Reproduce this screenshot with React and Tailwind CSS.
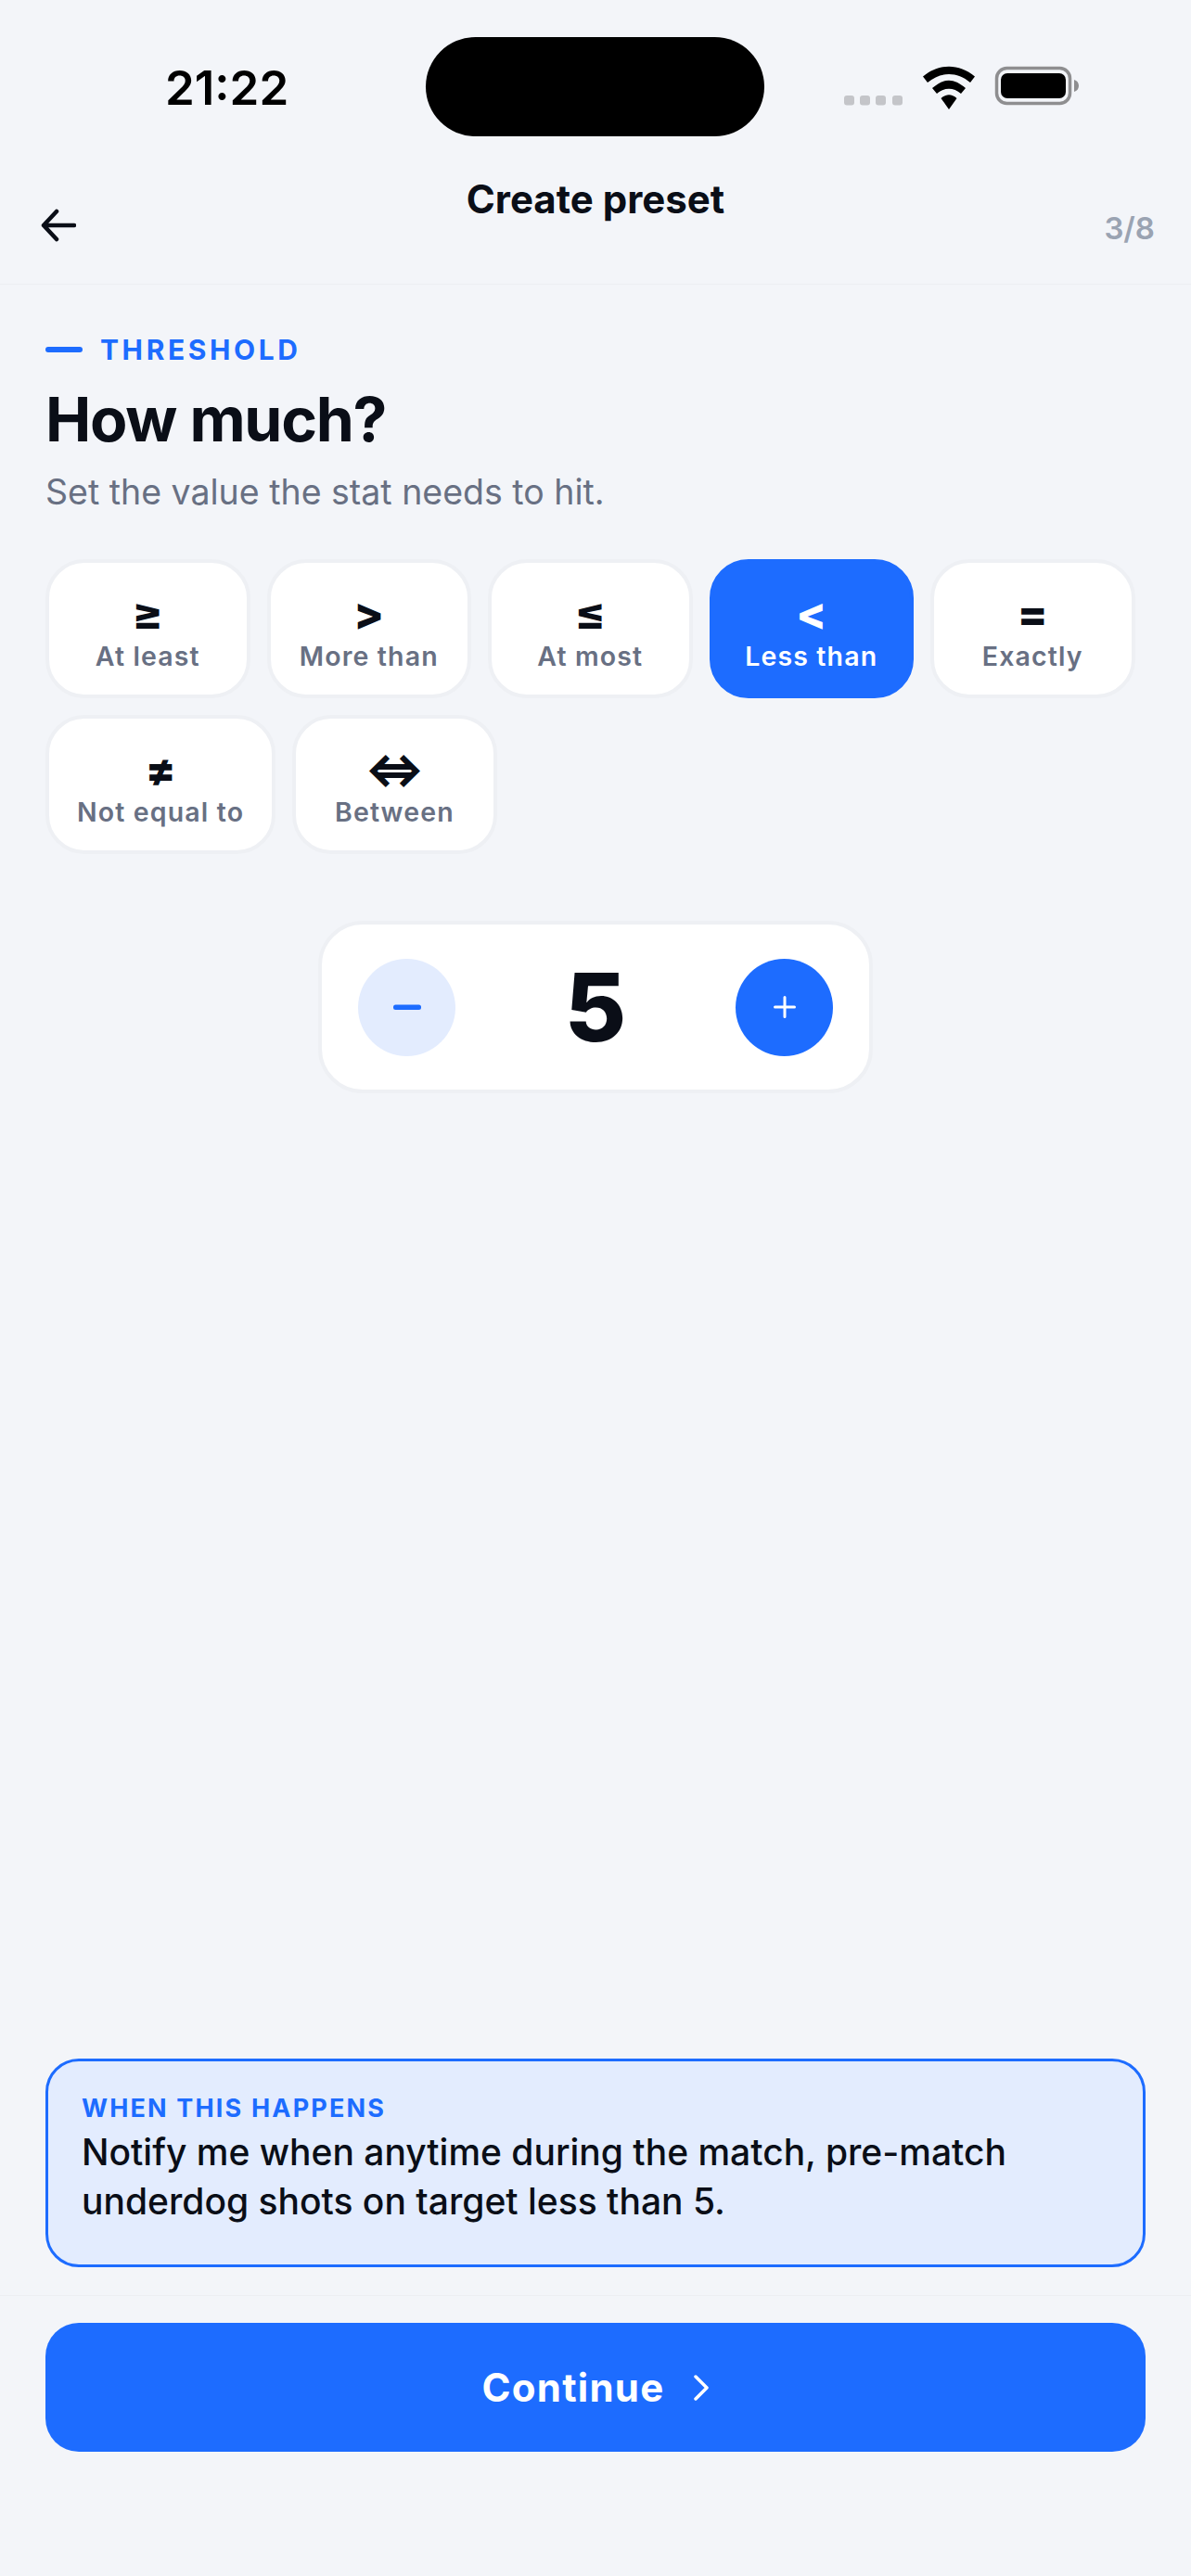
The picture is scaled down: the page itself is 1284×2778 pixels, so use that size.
const chips = [
  ["≥", "At least"],
  [">", "More than"],
  ["≤", "At most"],
  ["<", "Less than", true],
  ["=", "Exactly"],
  ["≠", "Not equal to"],
  ["⇔", "Between"],
];

function Chip({ sym, label, active }) {
  return (
    <div
      className={
        "flex h-[150px] min-w-[220.5px] flex-col items-center rounded-[42px] border-[4.5px] px-[30px] pt-[31px] " +
        (active ? "border-[#1d6cff] bg-[#1d6cff] text-white" : "border-[#eef0f4] bg-white text-[#0a0e17]")
      }
    >
      <span className="text-[48px] leading-[48px] font-extrabold">{sym}</span>
      <span
        className={
          "mt-[3px] text-[28.5px] leading-[38px] font-semibold tracking-[1.14px] whitespace-nowrap " +
          (active ? "text-white" : "text-[#687083]")
        }
      >
        {label}
      </span>
    </div>
  );
}

export default function App() {
  return (
    <div className="flex h-[2778px] w-[1284px] flex-col overflow-hidden bg-[#f3f5f9] font-['Inter',sans-serif] text-[#0a0e17]">
      <div className="relative h-[147px] shrink-0">
        <span className="absolute top-[65px] left-[178px] text-[51px] leading-[60px] font-semibold text-black">21:22</span>
        <div className="absolute top-[40px] left-[459px] h-[107px] w-[365px] rounded-[54px] bg-black" />
        <svg className="absolute top-[60px] left-[900px]" width="280" height="64" viewBox="0 0 280 64">
          <g fill="#c4c5c9">
            <rect x="10" y="43" width="11" height="10.5" rx="3" />
            <rect x="27" y="43" width="11" height="10.5" rx="3" />
            <rect x="44" y="43" width="11" height="10.5" rx="3" />
            <rect x="62" y="43" width="11" height="10.5" rx="3" />
          </g>
          <path d="M95 22.5 L100 29 C114 17 132 17 146 29 L151 22.5 C134 8 112 8 95 22.5Z M105 35 L110 41 C118 34 128 34 136 41 L141 35 C128 24 118 24 105 35Z M114.500 46 L123 58 L131.500 46 C126 41 120 41 114.500 46Z" fill="#000" />
          <rect x="174.500" y="13.500" width="79" height="38" rx="11" fill="none" stroke="#8e8e90" strokeWidth="3.500" />
          <rect x="179" y="19" width="70" height="27" rx="7" fill="#000" />
          <path d="M258 26 C261 27 263 29 263 32.500 C263 36 261 38 258 39Z" fill="#8e8e90" />
        </svg>
      </div>

      <header className="relative flex h-[160px] shrink-0 items-center justify-center border-b-[1.500px] border-[#edeff3] pb-[24px]">
        <svg className="absolute top-[78px] left-[44px]" width="38" height="36" viewBox="0 0 38 36" fill="none" stroke="#0a0e17" strokeWidth="4.500" strokeLinecap="round" strokeLinejoin="round">
          <path d="M36 18 H3 M17 3 L3 18 L17 33" />
        </svg>
        <h1 className="text-[42px] leading-[54px] font-bold">Create preset</h1>
        <span className="absolute top-[79px] right-[39px] text-[33px] leading-[40px] font-semibold text-[#9aa3b2]">3/8</span>
      </header>

      <main className="flex min-h-0 flex-1 flex-col px-[49px] pt-[51px]">
        <div className="flex items-center gap-[19px]">
          <span className="h-[6px] w-[40px] rounded-full bg-[#1d6cff]" />
          <span className="text-[30px] leading-[38px] font-bold tracking-[3.600px] text-[#1d6cff]">THRESHOLD</span>
        </div>
        <h2 className="mt-[17px] text-[66px] leading-[78px] font-bold tracking-[-1.300px]">How much?</h2>
        <p className="mt-[16px] text-[37.500px] leading-[48px] text-[#687083]">Set the value the stat needs to hit.</p>

        <div className="mt-[48px] flex flex-wrap gap-[18px]">
          {chips.map(([s, l, a]) => (
            <Chip key={l} sym={s} label={l} active={a} />
          ))}
        </div>

        <div className="mt-[72px] flex h-[186px] w-[598px] items-center justify-between self-center rounded-[48px] border-[4.500px] border-[#eef0f4] bg-white px-[39px]">
          <span className="flex h-[105px] w-[105px] items-center justify-center rounded-full bg-[#e3ecfe] text-[#1d6cff]">
            <svg width="30" height="30" viewBox="0 0 30 30"><rect x="0" y="12.500" width="30" height="5.500" rx="2.500" fill="currentColor" /></svg>
          </span>
          <span className="text-[102px] leading-[110px] font-extrabold">5</span>
          <span className="flex h-[105px] w-[105px] items-center justify-center rounded-full bg-[#1d6cff] text-white">
            <svg width="24" height="24" viewBox="0 0 24 24" fill="none" stroke="currentColor" strokeWidth="3" strokeLinecap="round"><path d="M1.500 12 H22.500 M12 1.500 V22.500" /></svg>
          </span>
        </div>
      </main>

      <section className="mx-[49px] shrink-0 rounded-[36px] border-[3px] border-[#1d6cff] bg-[#e3ecfe] px-[36px] pt-[33px]" style={{ height: 225 }}>
        <div className="text-[27px] leading-[36px] font-bold tracking-[2.160px] text-[#1d6cff]">WHEN THIS HAPPENS</div>
        <p className="mt-[3px] text-[39px] leading-[52.500px] font-medium">
          Notify me when anytime during the match, pre-match
          <br />
          underdog shots on target less than 5.
        </p>
      </section>

      <footer className="mt-[30px] h-[303px] shrink-0 border-t-[1.500px] border-[#edeff3] px-[49px] pt-[29px]">
        <button className="flex h-[139px] w-full items-center justify-center gap-[30px] rounded-[36px] bg-[#1d6cff] text-[42px] font-bold tracking-[1.260px] text-white">
          Continue
          <svg width="18" height="30" viewBox="0 0 18 30" fill="none" stroke="#fff" strokeWidth="3.500" strokeLinecap="round" strokeLinejoin="round"><path d="M3 3 L15 15 L3 27" /></svg>
        </button>
      </footer>
    </div>
  );
}
